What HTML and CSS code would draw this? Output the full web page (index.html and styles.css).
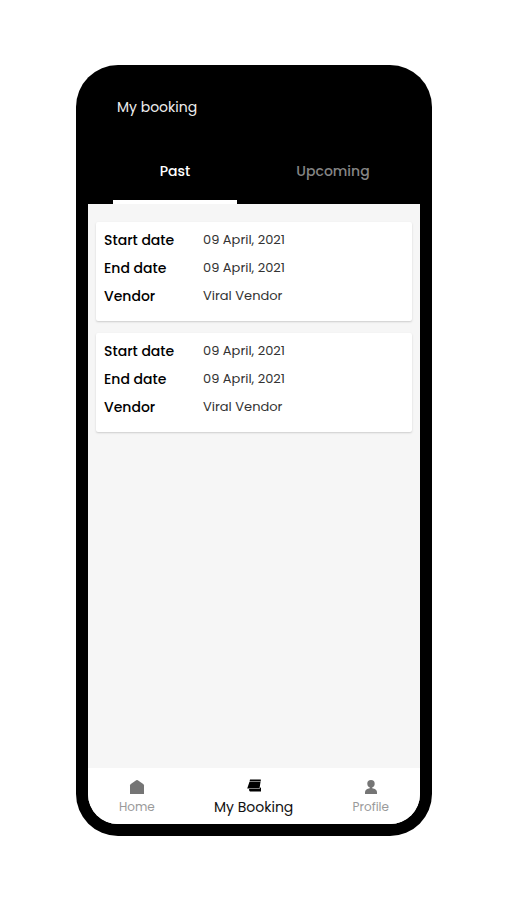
FILE: index.html
```html
<!DOCTYPE html>
<html lang="en">
<head>
<meta charset="utf-8">
<meta name="viewport" content="width=device-width, initial-scale=1">
<title>My booking</title>
<link rel="stylesheet" href="styles.css">
</head>
<body>
<div class="phone">
  <header class="header">
    <h1 class="title">My booking</h1>
    <div class="tabs" role="tablist">
      <button class="tab tab-active" type="button" role="tab" aria-selected="true">Past</button>
      <button class="tab" type="button" role="tab" aria-selected="false">Upcoming</button>
    </div>
  </header>
  <div class="screen">
    <main class="bookings">
      <dl class="card">
        <dt>Start date</dt><dd>09 April, 2021</dd>
        <dt>End date</dt><dd>09 April, 2021</dd>
        <dt>Vendor</dt><dd>Viral Vendor</dd>
      </dl>
      <dl class="card">
        <dt>Start date</dt><dd>09 April, 2021</dd>
        <dt>End date</dt><dd>09 April, 2021</dd>
        <dt>Vendor</dt><dd>Viral Vendor</dd>
      </dl>
    </main>
    <nav class="nav">
      <a class="nav-item" href="#home">
        <svg class="icon" viewBox="0 0 16 16" aria-hidden="true"><path d="M7.200 1.300Q8 .8 8.800 1.300L14.200 5Q15 5.600 15 6.500V15H1V6.500Q1 5.600 1.800 5Z"/></svg>
        <span>Home</span>
      </a>
      <a class="nav-item nav-current" href="#booking" aria-current="page">
        <svg class="icon" viewBox="0 0 16 16" aria-hidden="true"><path d="M4 .5H14.800V2.500H3.500ZM3.400 3H14.500L13.500 9.500H1.200Z"/><path d="M3 10H13.500L14 8.300L15 9V12.500H4Q3 12 3 10Z"/></svg>
        <span>My Booking</span>
      </a>
      <a class="nav-item" href="#profile">
        <svg class="icon" viewBox="0 0 16 16" aria-hidden="true"><circle cx="8" cy="4.700" r="3.700"/><path d="M6.800 7H9.200V10H6.800Z"/><path d="M2 15V13.500C2 10.500 5 9.300 8 9.300S14 10.500 14 13.500V15Z"/></svg>
        <span>Profile</span>
      </a>
    </nav>
  </div>
</div>
</body>
</html>
```
FILE: styles.css
```css
* {
  box-sizing: border-box;
}

body {
  display: flex;
  min-height: 100vh;
  margin: 0;
  padding: 65px 75px 64px 76px;
  background: #fff;
  color: #111;
  font-family: Poppins, Inter, sans-serif;
  font-size: 14px;
}

.phone {
  display: flex;
  flex: 1;
  flex-direction: column;
  padding: 0 12px 12px;
  border-radius: 42px;
  background: #000;
}

.header {
  padding: 30px 8px 0;
}

.title {
  margin: 0 0 32px;
  padding-left: 21px;
  color: #eee;
  font-size: 14px;
  font-weight: 400;
  line-height: 24px;
}

.tabs {
  display: grid;
  grid-template-columns: 1fr 1fr;
}

.tab {
  height: 53px;
  margin: 0 17px;
  padding: 0 0 9px;
  border: 0;
  border-bottom: 4px solid transparent;
  background: none;
  color: #858585;
  font: inherit;
  font-weight: 500;
  line-height: 36px;
}

.tab-active {
  border-color: #fff;
  color: #fff;
}

.screen {
  display: flex;
  flex: 1;
  flex-direction: column;
  overflow: hidden;
  border-radius: 0 0 30px 30px;
  background: #f6f6f6;
}

.bookings {
  display: flex;
  flex: 1;
  flex-direction: column;
  gap: 12px;
  padding: 18px 8px;
}

.card {
  display: grid;
  grid-template-columns: 99px 1fr;
  margin: 0;
  padding: 4px 8px 11px;
  border-radius: 2px;
  background: #fff;
  box-shadow: 0 1px 2px #ccc;
  line-height: 28px;
}

.card dt {
  color: #000;
  font-weight: 500;
}

.card dd {
  margin: 0;
  color: #333;
  font-size: 13px;
}

.nav {
  display: flex;
  justify-content: space-between;
  height: 56px;
  padding: 11px 31px 0;
  background: #fff;
}

.nav-item {
  display: flex;
  flex-direction: column;
  align-items: center;
  color: #9a9a9a;
  font-size: 12px;
  line-height: 24px;
  text-decoration: none;
}

.nav-current {
  color: #111;
  font-size: 14px;
}

.icon {
  width: 16px;
  height: 16px;
  fill: #757575;
}

.nav-current .icon {
  fill: #000;
}
```
